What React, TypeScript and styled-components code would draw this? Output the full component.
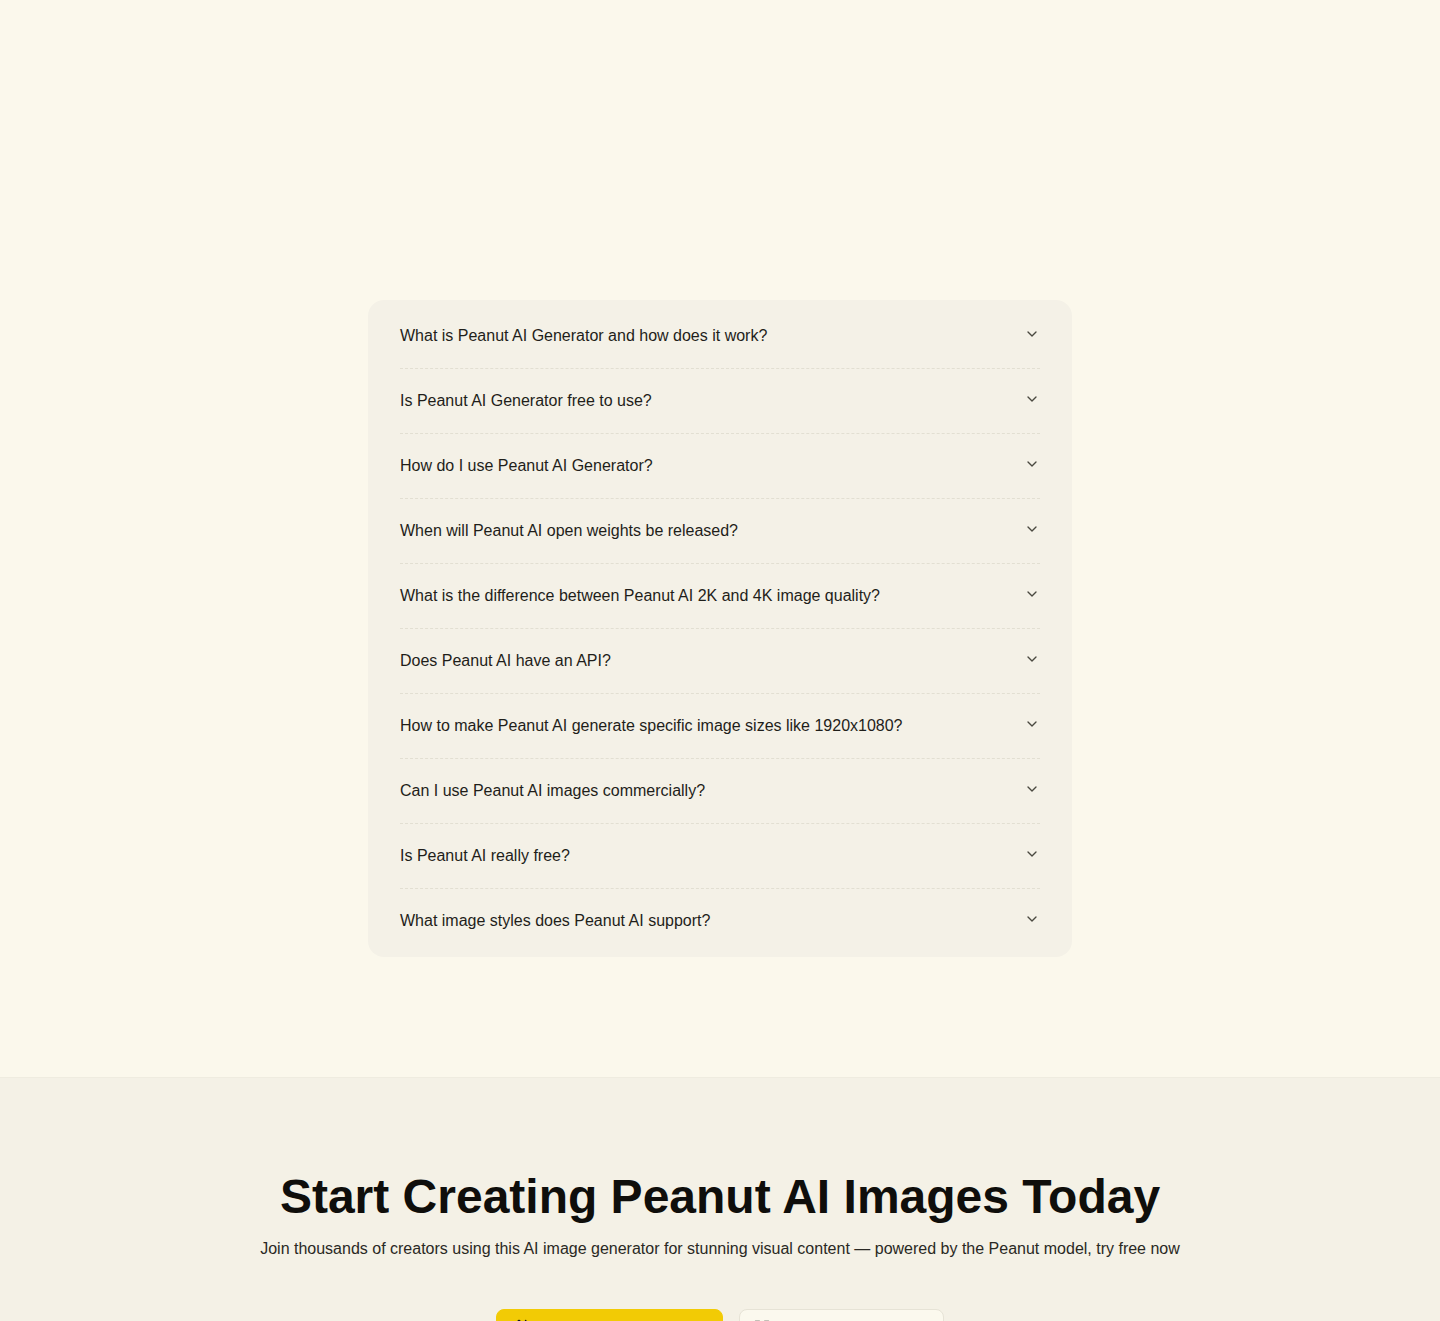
import React from "react";
import styled, { createGlobalStyle } from "styled-components";
import { ChevronDown, Sparkles, LayoutGrid } from "lucide-react";

const Global = createGlobalStyle`
  html, body { margin: 0; padding: 0; }
  body {
    background: #fbf8ec;
    font-family: "Liberation Sans", Arial, sans-serif;
    color: #1c1b17;
  }
`;

const FaqSection = styled.section`
  padding: 300px 0 120px;
  display: flex;
  justify-content: center;
  background: #fbf8ec;
`;

const FaqBox = styled.div`
  width: 704px;
  box-sizing: border-box;
  background: #f4f1e7;
  border-radius: 16px;
  padding: 4px 32px;
`;

const Item = styled.div<{ $last?: boolean }>`
  border-bottom: ${(p) => (p.$last ? "none" : "1px dashed #e2dfd2")};
`;

const Trigger = styled.button`
  all: unset;
  box-sizing: border-box;
  width: 100%;
  height: 64px;
  display: flex;
  align-items: center;
  justify-content: space-between;
  font-family: "Liberation Sans", Arial, sans-serif;
  font-size: 16px;
  line-height: 24px;
  color: #1f1e1a;
  cursor: pointer;
  padding-bottom: 1px;
`;

const Chevron = styled(ChevronDown)`
  color: #4a4840;
  flex-shrink: 0;
  margin-top: -3px;
`;

const CtaSection = styled.section`
  background: #f4f1e6;
  border-top: 1px solid #efece0;
  padding: 91px 24px 40px;
  display: flex;
  flex-direction: column;
  align-items: center;
`;

const Heading = styled.h2`
  margin: 0;
  font-size: 48px;
  line-height: 56px;
  font-weight: 700;
  color: #0f0e0b;
`;

const Sub = styled.p`
  margin: 12px 0 0;
  font-size: 16px;
  line-height: 24px;
  color: #2a2924;
`;

const Buttons = styled.div`
  display: flex;
  gap: 16px;
  margin-top: 48px;
`;

const Button = styled.a<{ $primary?: boolean }>`
  display: inline-flex;
  align-items: center;
  gap: 10px;
  box-sizing: border-box;
  height: 40px;
  padding: 0 12px;
  border-radius: 8px;
  font-size: 16px;
  font-weight: 600;
  white-space: nowrap;
  text-decoration: none;
  color: #1a1915;
  background: ${(p) => (p.$primary ? "#f2cb05" : "#fbf9ee")};
  border: 1px solid ${(p) => (p.$primary ? "#f2cb05" : "#e6e3d6")};
  width: ${(p) => (p.$primary ? "227px" : "205px")};

  svg {
    flex-shrink: 0;
  }
`;

const questions = [
  "What is Peanut AI Generator and how does it work?",
  "Is Peanut AI Generator free to use?",
  "How do I use Peanut AI Generator?",
  "When will Peanut AI open weights be released?",
  "What is the difference between Peanut AI 2K and 4K image quality?",
  "Does Peanut AI have an API?",
  "How to make Peanut AI generate specific image sizes like 1920x1080?",
  "Can I use Peanut AI images commercially?",
  "Is Peanut AI really free?",
  "What image styles does Peanut AI support?",
];

export default function App() {
  return (
    <>
      <Global />
      <FaqSection>
        <FaqBox>
          {questions.map((q, i) => (
            <Item key={q} $last={i === questions.length - 1}>
              <Trigger>
                <span>{q}</span>
                <Chevron size={16} strokeWidth={2} />
              </Trigger>
            </Item>
          ))}
        </FaqBox>
      </FaqSection>
      <CtaSection>
        <Heading>Start Creating Peanut AI Images Today</Heading>
        <Sub>
          Join thousands of creators using this AI image generator for stunning visual content — powered by the Peanut model, try free now
        </Sub>
        <Buttons>
          <Button $primary href="#">
            <Sparkles size={20} />
            Start Generating Free
          </Button>
          <Button href="#">
            <LayoutGrid size={20} />
            View Gallery
          </Button>
        </Buttons>
      </CtaSection>
    </>
  );
}
